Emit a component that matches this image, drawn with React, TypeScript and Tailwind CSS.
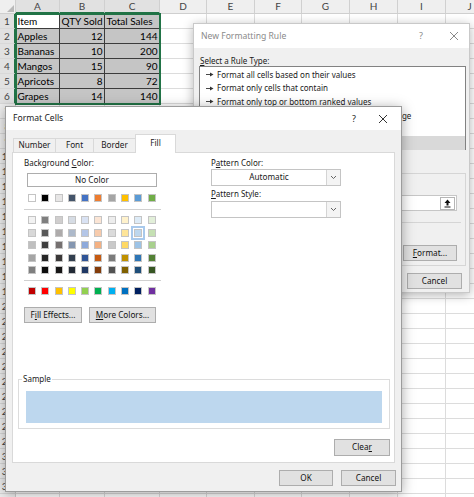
import React from 'react';

const cols = [
  { key: 'A', w: 'w-[44px]' },
  { key: 'B', w: 'w-[45px]' },
  { key: 'C', w: 'w-[55px]' },
  { key: 'D', w: 'w-[47px]' },
  { key: 'E', w: 'w-[48px]' },
  { key: 'F', w: 'w-[47px]' },
  { key: 'G', w: 'w-[48px]' },
  { key: 'H', w: 'w-[48px]' },
  { key: 'I', w: 'w-[48px]' },
  { key: 'J', w: 'w-[48px]' },
];

const data = [
  ['Item', 'QTY Sold', 'Total Sales'],
  ['Apples', '12', '144'],
  ['Bananas', '10', '200'],
  ['Mangos', '15', '90'],
  ['Apricots', '8', '72'],
  ['Grapes', '14', '140'],
];

const rows = Array.from({ length: 33 }, (_, i) => i + 1);

const themeColors = ['#ffffff', '#000000', '#e7e6e6', '#44546a', '#4472c4', '#ed7d31', '#a5a5a5', '#ffc000', '#5b9bd5', '#70ad47'];

const tints = [
  ['#f2f2f2', '#7f7f7f', '#d0cece', '#d6dce4', '#d9e2f3', '#fbe5d5', '#ededed', '#fff2cc', '#ddebf7', '#e2efd9'],
  ['#d8d8d8', '#595959', '#aeabab', '#adb9ca', '#b4c6e7', '#f7cbac', '#dbdbdb', '#fee599', '#bdd7ee', '#c5e0b3'],
  ['#bfbfbf', '#3f3f3f', '#757070', '#8496b0', '#8eaadb', '#f4b183', '#c9c9c9', '#ffd965', '#9dc3e6', '#a8d08d'],
  ['#a5a5a5', '#262626', '#3a3838', '#323f4f', '#2f5496', '#c55a11', '#7b7b7b', '#bf9000', '#2e75b5', '#538135'],
  ['#7f7f7f', '#0c0c0c', '#171616', '#222a35', '#1f3864', '#833c0b', '#525252', '#7f6000', '#1e4e79', '#375623'],
];

const standardColors = ['#c00000', '#ff0000', '#ffc000', '#ffff00', '#92d050', '#00b050', '#00b0f0', '#0070c0', '#002060', '#7030a0'];

const ruleTypes = [
  'Format all cells based on their values',
  'Format only cells that contain',
  'Format only top or bottom ranked values',
  'Format only values that are above or below average',
  'Format only unique or duplicate values',
  'Use a formula to determine which cells to format',
];

function CloseIcon({ color }: { color: string }) {
  return (
    <svg width="10" height="10" viewBox="0 0 10 10">
      <path d="M1 1 L9 9 M9 1 L1 9" stroke={color} strokeWidth="1" fill="none" />
    </svg>
  );
}

function Chevron() {
  return (
    <svg width="7" height="5" viewBox="0 0 7 5">
      <path d="M1 1 L3.5 3.5 L6 1" stroke="#555" strokeWidth="0.9" fill="none" />
    </svg>
  );
}

function Bullet() {
  return (
    <svg width="8" height="5" viewBox="0 0 8 5" className="shrink-0">
      <path d="M0 2.5 H4.5" stroke="#333" strokeWidth="0.9" />
      <path d="M4 0.5 L7.5 2.5 L4 4.5 Z" fill="#333" />
    </svg>
  );
}

function Button({ children, className = '' }: { children: React.ReactNode; className?: string }) {
  return (
    <div className={`flex items-center justify-center bg-[#e1e1e1] border border-[#adadad] text-[8.2px] text-[#111] whitespace-nowrap ${className}`}>
      {children}
    </div>
  );
}

function Swatch({ color, selected }: { color: string; selected?: boolean }) {
  return (
    <div
      className={`w-[8px] h-[8px] shrink-0 border border-[#c4c4c4] ${selected ? 'outline-2 outline-offset-1 outline-[#a8c9ec]' : ''}`}
      style={{ backgroundColor: color }}
    />
  );
}

function Sheet() {
  return (
    <div className="font-['Lato',sans-serif]">
      {/* column headers */}
      <div className="flex h-[14px]">
        <div className="w-[16px] shrink-0 bg-[#efefef] border-r border-b border-[#cfcfcf] flex items-end justify-end pr-[1px] pb-[1px]">
          <svg width="7" height="7" viewBox="0 0 7 7">
            <path d="M7 0 L7 7 L0 7 Z" fill="#b9b9b9" />
          </svg>
        </div>
        {cols.map((c, i) => (
          <div
            key={c.key}
            className={`${c.w} shrink-0 border-r border-[#d0d0d0] flex items-center justify-center text-[10px] text-[#444] ${
              i < 3 ? 'bg-[#e1e1e1] border-b-2 border-b-[#217346]' : 'bg-[#efefef] border-b border-b-[#cfcfcf]'
            }`}
          >
            {c.key}
          </div>
        ))}
      </div>
      {rows.map((r) => (
        <div key={r} className="flex h-[15px]">
          <div
            className={`w-[16px] shrink-0 border-b border-[#d8d8d8] flex items-center justify-center text-[10px] text-[#444] ${
              r <= 6 ? 'bg-[#e1e1e1] border-r-2 border-r-[#217346]' : 'bg-[#efefef] border-r border-r-[#cfcfcf]'
            }`}
          >
            {r}
          </div>
          {cols.map((c, ci) => {
            const inData = r <= 6 && ci < 3;
            const text = inData ? data[r - 1][ci] : '';
            const numeric = inData && r > 1 && ci > 0;
            const shaded = inData && !(r === 1 && ci === 0);
            return (
              <div
                key={c.key}
                className={`${c.w} shrink-0 border-r border-b flex items-center px-[1.5px] text-[10px] text-black leading-none whitespace-nowrap overflow-hidden ${
                  inData ? 'border-[#3c3c3c]' : 'border-[#dcdcdc]'
                } ${shaded ? 'bg-[#c5c5c5]' : 'bg-white'} ${numeric ? 'justify-end' : 'justify-start'}`}
              >
                {text}
              </div>
            );
          })}
        </div>
      ))}
    </div>
  );
}

function NewRuleDialog() {
  return (
    <div className="absolute left-[193px] top-[23px] w-[277px] h-[270px] overflow-hidden border border-[#c9c9c9] bg-[#f0f0f0] shadow-[0_2px_10px_rgba(0,0,0,0.3)] font-['Noto_Sans',sans-serif] text-[#1a1a1a]">
      <div className="h-[24px] bg-white flex items-center pl-[7px] pr-[10px] text-[8.6px] text-[#8a8a8a]">
        <span>New Formatting Rule</span>
        <span className="ml-auto text-[9px] text-[#8a8a8a] mr-[26px]">?</span>
        <CloseIcon color="#8a8a8a" />
      </div>
      <div className="flex flex-col px-[5px]">
        <div className="pt-[7px] pl-[1px] h-[18px] leading-[11px] text-[8px]">
          <span className="underline">S</span>elect a Rule Type:
        </div>
        <div className="w-[267px] h-[84px] border border-[#828282] bg-white py-[1px] text-[8px]">
          {ruleTypes.map((t, i) => (
            <div
              key={t}
              className={`h-[13.6px] flex items-center gap-[3px] pl-[6px] whitespace-nowrap ${i === 5 ? 'bg-[#d9d9d9]' : ''}`}
            >
              <Bullet />
              <span>{t}</span>
            </div>
          ))}
        </div>
        <div className="mt-[6px] h-[11px] leading-[11px] pl-[1px] text-[8px]">
          <span className="underline">E</span>dit the Rule Description:
        </div>
        <div className="mt-[6px] w-[267px] h-[93px] border border-[#d5d5d5] flex flex-col px-[6px] pr-[8px] text-[8px]">
          <div className="mt-[5px] h-[11px] leading-[11px]">
            F<span className="underline">o</span>rmat values where this formula is true:
          </div>
          <div className="mt-[5px] h-[16px] bg-white border border-[#c6c6c6] flex items-center justify-end pr-[1px]">
            <div className="w-[15px] h-[13px] border border-[#b5b5b5] bg-white flex items-center justify-center">
              <svg width="7" height="9" viewBox="0 0 7 9">
                <path d="M3.5 0.5 L6.5 4 H4.5 V6.5 H2.5 V4 H0.5 Z" fill="#111" />
                <path d="M0.5 8 H6.5" stroke="#111" strokeWidth="1" />
              </svg>
            </div>
          </div>
          <div className="mt-[11px] h-px bg-[#d5d5d5] mr-[-4px]" />
          <div className="mt-[19px] flex items-center">
            <span>Preview:</span>
            <div className="ml-[20px] w-[120px] h-[22px] flex items-center justify-center">No Format Set</div>
            <Button className="ml-auto w-[54px] h-[16px]">
              <span className="underline">F</span>ormat...
            </Button>
          </div>
        </div>
        <div className="mt-[7px] flex justify-end gap-[6px] mr-[2px]">
          <Button className="w-[55px] h-[16px]">OK</Button>
          <Button className="w-[55px] h-[16px]">Cancel</Button>
        </div>
      </div>
    </div>
  );
}

function FormatCellsDialog() {
  return (
    <div className="absolute left-[5px] top-[106px] w-[397px] h-[386px] border border-[#9c9c9c] bg-[#f0f0f0] shadow-[0_2px_12px_rgba(0,0,0,0.35)] font-['Noto_Sans',sans-serif] text-[#1a1a1a]">
      <div className="h-[23px] bg-white flex items-center pl-[7px] pr-[13px] text-[8.6px] text-[#222]">
        <span>Format Cells</span>
        <span className="ml-auto text-[9px] mr-[22px]">?</span>
        <CloseIcon color="#333" />
      </div>
      <div className="px-[6px]">
        {/* tabs */}
        <div className="mt-[4px] h-[18px] flex items-end pl-[1px] text-[8.2px]">
          <div className="w-[42px] h-[14px] border-l border-t border-[#d9d9d9] flex items-center justify-center">Number</div>
          <div className="w-[38px] h-[14px] border-l border-t border-[#d9d9d9] flex items-center justify-center">Font</div>
          <div className="w-[42px] h-[14px] border-l border-t border-[#d9d9d9] flex items-center justify-center">Border</div>
          <div className="relative z-10 -mb-px w-[41px] h-[19px] bg-white border-x border-t border-[#d9d9d9] flex items-center justify-center pb-[2px]">
            Fill
          </div>
        </div>
        {/* panel */}
        <div className="w-[383px] h-[311px] bg-white border border-[#d9d9d9] flex flex-col text-[8px]">
          <div className="h-[170px] flex pt-[4px] pl-[11px]">
            <div className="w-[187px] flex flex-col">
              <div className="h-[12px] leading-[12px]">
                Background <span className="underline">C</span>olor:
              </div>
              <div className="mt-[4px] ml-[3px] w-[130px] h-[14px] border border-[#adadad] bg-white flex items-center justify-center text-[8.2px]">
                No Color
              </div>
              <div className="mt-[7px] ml-[4px] flex gap-x-[5.3px]">
                {themeColors.map((c) => (
                  <Swatch key={c} color={c} />
                ))}
              </div>
              <div className="mt-[7px] w-[137px] h-px bg-[#d0d0d0]" />
              <div className="mt-[6px] ml-[4px] flex flex-col gap-y-[4.6px]">
                {tints.map((row, ri) => (
                  <div key={ri} className="flex gap-x-[5.3px]">
                    {row.map((c, ci) => (
                      <Swatch key={c + ci} color={c} selected={ri === 1 && ci === 8} />
                    ))}
                  </div>
                ))}
              </div>
              <div className="mt-[5.5px] w-[137px] h-px bg-[#d0d0d0]" />
              <div className="mt-[6px] ml-[4px] flex gap-x-[5.3px]">
                {standardColors.map((c) => (
                  <Swatch key={c} color={c} />
                ))}
              </div>
              <div className="mt-[12px] flex gap-[7px]">
                <Button className="w-[58px] h-[16px]">
                  F<span className="underline">i</span>ll Effects...
                </Button>
                <Button className="w-[67px] h-[16px]">
                  <span className="underline">M</span>ore Colors...
                </Button>
              </div>
            </div>
            <div className="w-[130px] flex flex-col">
              <div className="h-[12px] leading-[12px]">
                P<span className="underline">a</span>ttern Color:
              </div>
              <div className="h-[17px] border border-[#c4c4c4] bg-white flex items-center">
                <span className="flex-1 text-center text-[8.2px]">Automatic</span>
                <div className="w-[14px] h-[15px] border-l border-[#d4d4d4] bg-[#f4f4f4] flex items-center justify-center">
                  <Chevron />
                </div>
              </div>
              <div className="mt-[2px] h-[12px] leading-[12px]">
                <span className="underline">P</span>attern Style:
              </div>
              <div className="mt-[1px] h-[17px] border border-[#c4c4c4] bg-white flex items-center justify-end">
                <div className="w-[14px] h-[15px] border-l border-[#d4d4d4] bg-[#f4f4f4] flex items-center justify-center">
                  <Chevron />
                </div>
              </div>
            </div>
          </div>
          <div className="relative mt-[56px] ml-[5px] w-[372px] h-[50px] border border-[#dcdcdc] flex flex-col">
            <span className="absolute -top-[7px] left-[3px] bg-white px-[1px] leading-[12px]">Sample</span>
            <div className="mt-[11px] mx-[7px] h-[32px] bg-[#bdd7ee]" />
          </div>
          <Button className="mt-[10px] self-end mr-[4px] w-[56px] h-[17px]">
            Clea<span className="underline">r</span>
          </Button>
        </div>
        <div className="mt-[7px] flex justify-end gap-[8px] mr-[-1px]">
          <Button className="w-[54px] h-[16px] border-[#0078d7]">OK</Button>
          <Button className="w-[55px] h-[16px]">Cancel</Button>
        </div>
      </div>
    </div>
  );
}

export default function App() {
  return (
    <div className="relative w-[474px] h-[497px] overflow-hidden bg-white">
      <Sheet />
      {/* selection outline */}
      <div className="absolute left-[15px] top-[13px] w-[146px] h-[92px] border-2 border-[#217346] pointer-events-none" />
      <NewRuleDialog />
      <FormatCellsDialog />
    </div>
  );
}
